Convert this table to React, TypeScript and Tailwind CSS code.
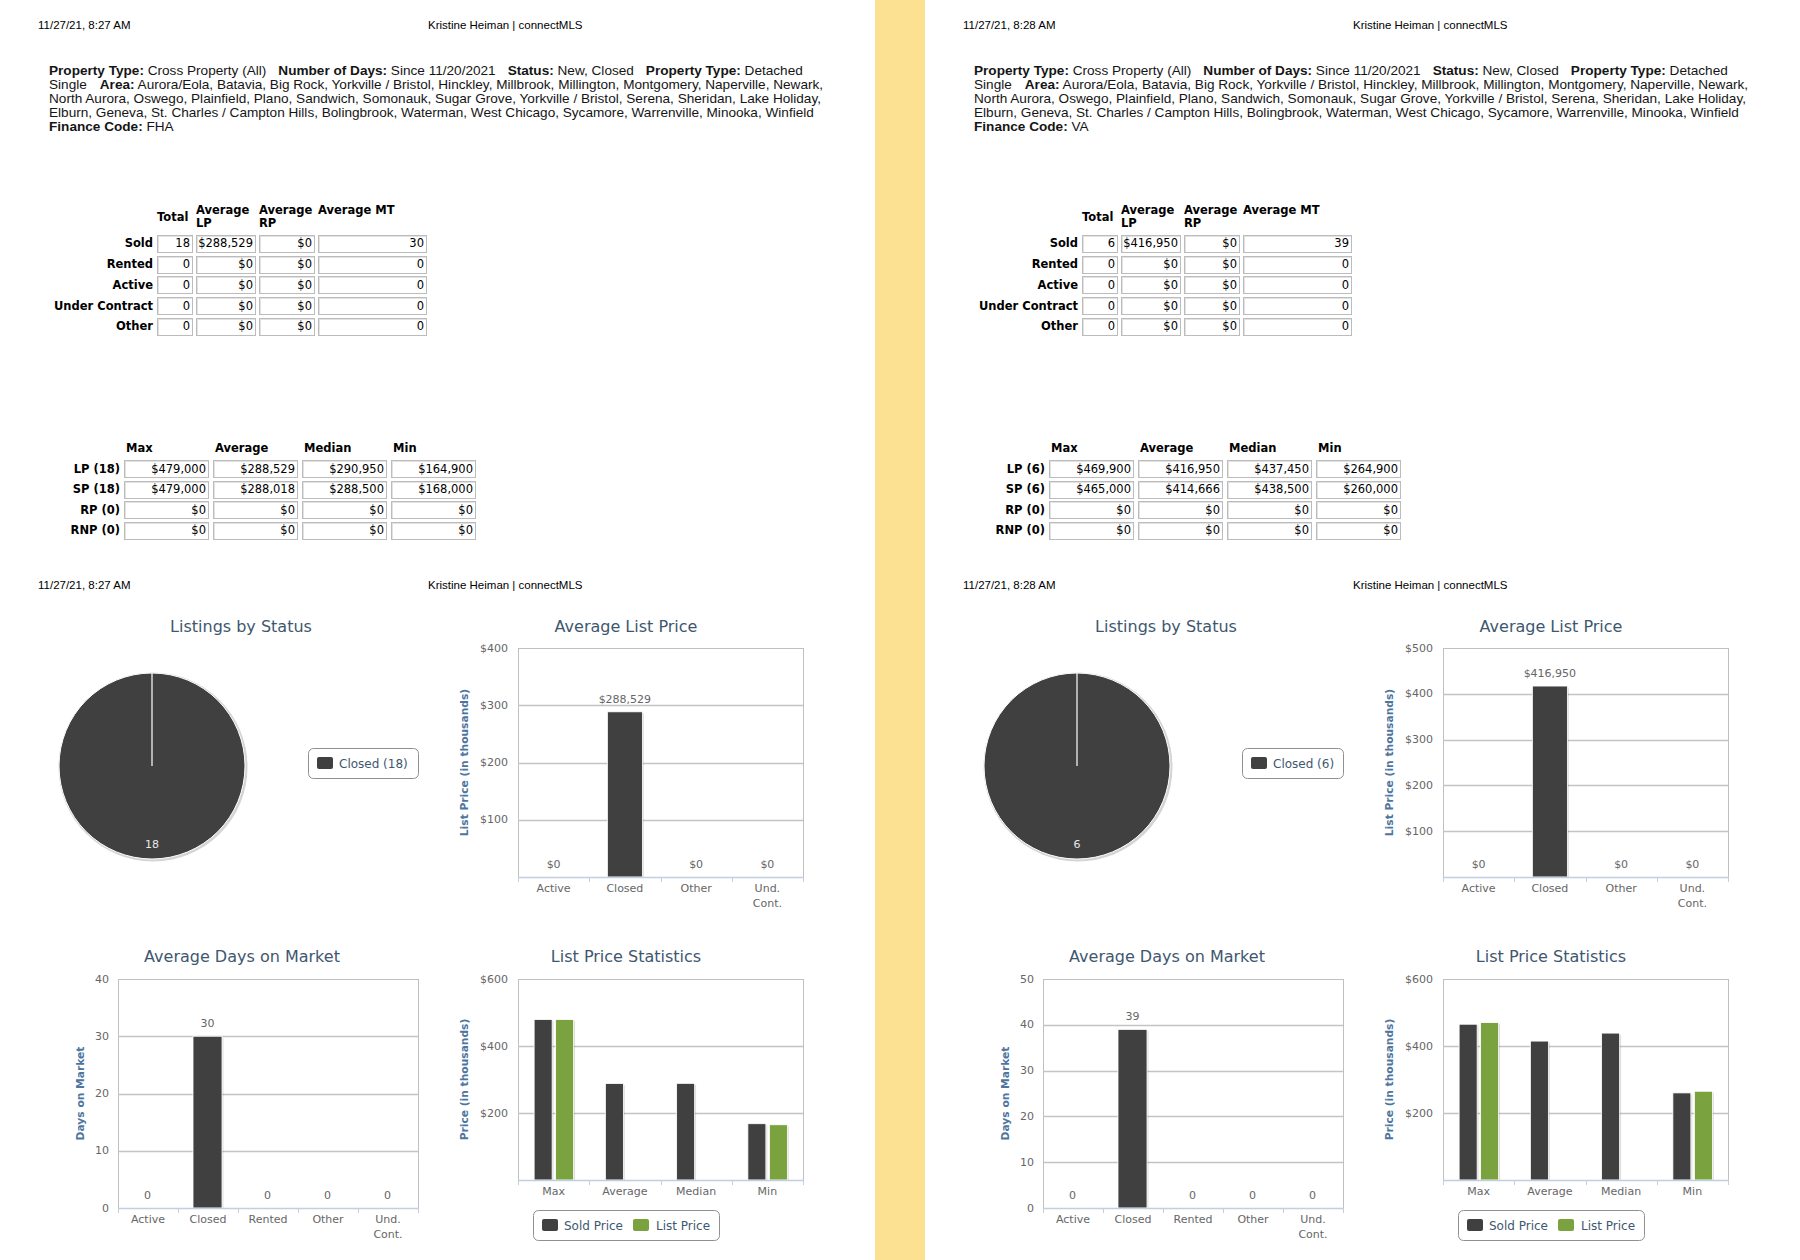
import React from "react";

const CHART_FONT = "DejaVu Sans, Verdana, sans-serif";
const DARK = "#404040";
const GREEN = "#7aa23e";

type PageData = {
  date: string;
  finance: string;
  t1: string[][];
  t2: { label: string; vals: string[] }[];
  pieCount: number;
  pieLegend: string;
  pieLegendX: number;
  pieLegendW: number;
  avgLP: { yMax: number; values: number[]; labels: string[] };
  days: { yMax: number; values: number[] };
  stats: { sold: number[]; list: (number | null)[] };
};

function Header({ date }: { date: string }) {
  return (
    <div className="flex items-center h-[14px] pl-[38px] font-['Liberation_Sans',Arial,sans-serif] text-[11.5px] leading-[14px] text-black whitespace-nowrap">
      <span className="w-[390px]">{date}</span>
      <span>Kristine Heiman | connectMLS</span>
    </div>
  );
}

function Criteria({ finance }: { finance: string }) {
  return (
    <div className="mt-[32px] pl-[49px] font-['Liberation_Sans',Arial,sans-serif] text-[13.6px] leading-[14px] text-[#151515] whitespace-nowrap">
      <div>
        <b>Property Type:</b> Cross Property (All)
        <b className="ml-[12px]">Number of Days:</b> Since 11/20/2021
        <b className="ml-[12px]">Status:</b> New, Closed
        <b className="ml-[12px]">Property Type:</b> Detached
      </div>
      <div>
        Single<b className="ml-[13px]">Area:</b> Aurora/Eola, Batavia, Big Rock, Yorkville / Bristol, Hinckley, Millbrook, Millington, Montgomery, Naperville, Newark,
      </div>
      <div>
        North Aurora, Oswego, Plainfield, Plano, Sandwich, Somonauk, Sugar Grove, Yorkville / Bristol, Serena, Sheridan, Lake Holiday,
      </div>
      <div>
        Elburn, Geneva, St. Charles / Campton Hills, Bolingbrook, Waterman, West Chicago, Sycamore, Warrenville, Minooka, Winfield
      </div>
      <div>
        <b>Finance Code:</b> {finance}
      </div>
    </div>
  );
}

const cellCls =
  "h-[18px] border border-[#bcbcbc] shadow-[inset_1px_1px_0_#e2e2e2] flex items-center justify-end pr-[2px] font-normal";

function Table1({ rows }: { rows: string[][] }) {
  const labels = ["Sold", "Rented", "Active", "Under Contract", "Other"];
  return (
    <div className="mt-[68px] grid grid-cols-[154px_36px_60px_56px_109px] gap-x-[3px] gap-y-[2.7px] font-['DejaVu_Sans',Verdana,sans-serif] text-[11.5px] leading-[13px] text-black w-max">
      <div className="h-[30px]" />
      <div className="h-[30px] flex items-center font-bold">Total</div>
      <div className="h-[30px] flex items-center font-bold">
        Average
        <br />
        LP
      </div>
      <div className="h-[30px] flex items-center font-bold">
        Average
        <br />
        RP
      </div>
      <div className="h-[30px] flex items-start pt-[2px] font-bold whitespace-nowrap">Average MT</div>
      {labels.map((l, i) => (
        <React.Fragment key={l}>
          <div className="h-[18px] flex items-center justify-end pr-[1px] font-bold whitespace-nowrap">{l}</div>
          {rows[i].map((v, j) => (
            <div key={j} className={cellCls}>
              {v}
            </div>
          ))}
        </React.Fragment>
      ))}
    </div>
  );
}

function Table2({ rows }: { rows: { label: string; vals: string[] }[] }) {
  return (
    <div className="mt-[106.7px] grid grid-cols-[120px_85px_85px_85px_85px] gap-x-[4px] gap-y-[2.4px] font-['DejaVu_Sans',Verdana,sans-serif] text-[11.5px] leading-[13px] text-black w-max">
      <div className="h-[15.6px]" />
      {["Max", "Average", "Median", "Min"].map((h) => (
        <div key={h} className="h-[15.6px] pl-[2px] font-bold">
          {h}
        </div>
      ))}
      {rows.map((r) => (
        <React.Fragment key={r.label}>
          <div className="h-[18px] flex items-center justify-end font-bold whitespace-nowrap">{r.label}</div>
          {r.vals.map((v, j) => (
            <div key={j} className={cellCls}>
              {v}
            </div>
          ))}
        </React.Fragment>
      ))}
    </div>
  );
}

function PieChart({ count, legend, lx, lw }: { count: number; legend: string; lx: number; lw: number }) {
  const cx = 152;
  const cy = 166;
  return (
    <svg width={437} height={330} className="block" fontFamily={CHART_FONT}>
      <text x={241} y={26} textAnchor="middle" dominantBaseline="central" fontSize={16} fill="#3e576f">
        Listings by Status
      </text>
      <circle cx={cx + 1} cy={cy + 1} r={94.5} fill="#d4d4d4" />
      <circle cx={cx} cy={cy} r={93} fill={DARK} stroke="#ffffff" strokeWidth={1} />
      <line x1={cx} y1={cy - 93} x2={cx} y2={cy} stroke="#ffffff" strokeWidth={1.2} />
      <text x={cx} y={244} textAnchor="middle" dominantBaseline="central" fontSize={11} fill="#e8e8e8">
        {count}
      </text>
      <rect x={lx + 0.5} y={148.5} width={lw} height={30} rx={5} fill="#ffffff" stroke="#909090" />
      <rect x={lx + 9} y={157} width={16} height={12} rx={2} fill={DARK} />
      <text x={lx + 31} y={163.5} dominantBaseline="central" fontSize={12} fill="#3e576f">
        {legend}
      </text>
    </svg>
  );
}

type Bar = { color: string; value: number | null; w: number; off: number; label?: string };

function BarChart(props: {
  w: number;
  title: string;
  titleX: number;
  l: number;
  r: number;
  t: number;
  b: number;
  yMax: number;
  yStep: number;
  fmt: (v: number) => string;
  showZero: boolean;
  yLabelX: number;
  axisTitle: string;
  axisX: number;
  cats: string[][];
  bars: Bar[][];
  legend?: boolean;
}) {
  const { w, title, titleX, l, r, t, b, yMax, yStep, fmt, showZero, yLabelX, axisTitle, axisX, cats, bars, legend } = props;
  const ticks: number[] = [];
  for (let v = 0; v <= yMax; v += yStep) ticks.push(v);
  const Y = (v: number) => b - (v / yMax) * (b - t);
  const cw = (r - l) / cats.length;
  return (
    <svg width={w} height={330} className="block" fontFamily={CHART_FONT}>
      <text x={titleX} y={26} textAnchor="middle" dominantBaseline="central" fontSize={16} fill="#3e576f">
        {title}
      </text>
      <rect x={l + 0.5} y={t + 0.5} width={r - l} height={b - t} fill="#ffffff" stroke="#c0c0c0" />
      {ticks
        .filter((v) => v > 0 && v < yMax)
        .map((v) => (
          <line key={v} x1={l} x2={r} y1={Math.round(Y(v)) + 0.5} y2={Math.round(Y(v)) + 0.5} stroke="#c4c4c4" strokeWidth={1.3} />
        ))}
      {ticks
        .filter((v) => showZero || v > 0)
        .map((v) => (
          <text key={v} x={yLabelX} y={Y(v)} textAnchor="end" dominantBaseline="central" fontSize={11} fill="#666666">
            {fmt(v)}
          </text>
        ))}
      <text
        transform={`translate(${axisX},${(t + b) / 2}) rotate(-90)`}
        textAnchor="middle"
        dominantBaseline="central"
        fontSize={10.7}
        fontWeight="bold"
        fill="#4d759e"
      >
        {axisTitle}
      </text>
      {cats.map((_, i) => {
        const cx = l + cw * (i + 0.5);
        return bars[i].map((bar, k) => {
          if (bar.value === null) return null;
          const top = Y(bar.value);
          const x = cx + bar.off;
          return (
            <g key={`${i}-${k}`}>
              {bar.value > 0 && (
                <>
                  <rect x={x + 1.5} y={top + 1.5} width={bar.w} height={b - top - 1.5} fill="rgba(0,0,0,0.12)" />
                  <rect x={x} y={top} width={bar.w} height={b - top} fill={bar.color} stroke="#ffffff" strokeWidth={0.8} />
                </>
              )}
              {bar.label !== undefined && (
                <text x={x + bar.w / 2} y={top - 12.5} textAnchor="middle" dominantBaseline="central" fontSize={11} fill="#666666">
                  {bar.label}
                </text>
              )}
            </g>
          );
        });
      })}
      <line x1={l} x2={r + 1} y1={b + 0.5} y2={b + 0.5} stroke="#c0d0e0" strokeWidth={1.5} />
      {Array.from({ length: cats.length + 1 }).map((_, i) => {
        const x = Math.round(l + cw * i) + 0.5;
        return <line key={i} x1={x} x2={x} y1={b} y2={b + 5} stroke="#c0d0e0" />;
      })}
      {cats.map((lines, i) => {
        const cx = l + cw * (i + 0.5);
        return lines.map((ln, j) => (
          <text key={`${i}-${j}`} x={cx} y={b + 11 + j * 15} textAnchor="middle" dominantBaseline="central" fontSize={11} fill="#666666">
            {ln}
          </text>
        ));
      })}
      {legend && (
        <g>
          <rect x={96.5} y={280.5} width={186} height={30} rx={5} fill="#ffffff" stroke="#909090" />
          <rect x={105} y={289} width={16} height={12} rx={2} fill={DARK} />
          <text x={127} y={295.5} dominantBaseline="central" fontSize={12} fill="#3e576f">
            Sold Price
          </text>
          <rect x={196} y={289} width={16} height={12} rx={2} fill={GREEN} />
          <text x={219} y={295.5} dominantBaseline="central" fontSize={12} fill="#3e576f">
            List Price
          </text>
        </g>
      )}
    </svg>
  );
}

const dollars = (v: number) => `$${v}`;
const plain = (v: number) => `${v}`;

function Page({ d }: { d: PageData }) {
  const avgCats = [["Active"], ["Closed"], ["Other"], ["Und.", "Cont."]];
  const dayCats = [["Active"], ["Closed"], ["Rented"], ["Other"], ["Und.", "Cont."]];
  const statCats = [["Max"], ["Average"], ["Median"], ["Min"]];
  return (
    <div className="w-[875px] shrink-0 flex flex-col bg-white">
      <div className="h-[19px]" />
      <Header date={d.date} />
      <Criteria finance={d.finance} />
      <Table1 rows={d.t1} />
      <Table2 rows={d.t2} />
      <div className="h-[40.3px]" />
      <Header date={d.date} />
      <div className="h-[8px]" />
      <div className="grid grid-cols-[437px_438px]">
        <PieChart count={d.pieCount} legend={d.pieLegend} lx={d.pieLegendX} lw={d.pieLegendW} />
        <BarChart
          w={438}
          title="Average List Price"
          titleX={189}
          l={81}
          r={366}
          t={48}
          b={277}
          yMax={d.avgLP.yMax}
          yStep={100}
          fmt={dollars}
          showZero={false}
          yLabelX={71}
          axisTitle="List Price (in thousands)"
          axisX={27}
          cats={avgCats}
          bars={d.avgLP.values.map((v, i) => [
            { color: DARK, value: v / 1000, w: 35, off: -17.5, label: d.avgLP.labels[i] },
          ])}
        />
        <BarChart
          w={437}
          title="Average Days on Market"
          titleX={242}
          l={118}
          r={418}
          t={49}
          b={278}
          yMax={d.days.yMax}
          yStep={10}
          fmt={plain}
          showZero={true}
          yLabelX={109}
          axisTitle="Days on Market"
          axisX={80}
          cats={dayCats}
          bars={d.days.values.map((v) => [{ color: DARK, value: v, w: 29, off: -15, label: `${v}` }])}
        />
        <BarChart
          w={438}
          title="List Price Statistics"
          titleX={189}
          l={81}
          r={366}
          t={49}
          b={250}
          yMax={600}
          yStep={200}
          fmt={dollars}
          showZero={false}
          yLabelX={71}
          axisTitle="Price (in thousands)"
          axisX={27}
          cats={statCats}
          legend
          bars={d.stats.sold.map((s, i) => [
            { color: DARK, value: s / 1000, w: 18, off: -19.5 },
            { color: GREEN, value: d.stats.list[i] === null ? null : (d.stats.list[i] as number) / 1000, w: 18, off: 2 },
          ])}
        />
      </div>
    </div>
  );
}

const zeroRow = ["0", "$0", "$0", "0"];
const zeroT2 = ["$0", "$0", "$0", "$0"];

const LEFT: PageData = {
  date: "11/27/21, 8:27 AM",
  finance: "FHA",
  t1: [["18", "$288,529", "$0", "30"], zeroRow, zeroRow, zeroRow, zeroRow],
  t2: [
    { label: "LP (18)", vals: ["$479,000", "$288,529", "$290,950", "$164,900"] },
    { label: "SP (18)", vals: ["$479,000", "$288,018", "$288,500", "$168,000"] },
    { label: "RP (0)", vals: zeroT2 },
    { label: "RNP (0)", vals: zeroT2 },
  ],
  pieCount: 18,
  pieLegend: "Closed (18)",
  pieLegendX: 308,
  pieLegendW: 110,
  avgLP: { yMax: 400, values: [0, 288529, 0, 0], labels: ["$0", "$288,529", "$0", "$0"] },
  days: { yMax: 40, values: [0, 30, 0, 0, 0] },
  stats: { sold: [479000, 288018, 288500, 168000], list: [479000, null, null, 164900] },
};

const RIGHT: PageData = {
  date: "11/27/21, 8:28 AM",
  finance: "VA",
  t1: [["6", "$416,950", "$0", "39"], zeroRow, zeroRow, zeroRow, zeroRow],
  t2: [
    { label: "LP (6)", vals: ["$469,900", "$416,950", "$437,450", "$264,900"] },
    { label: "SP (6)", vals: ["$465,000", "$414,666", "$438,500", "$260,000"] },
    { label: "RP (0)", vals: zeroT2 },
    { label: "RNP (0)", vals: zeroT2 },
  ],
  pieCount: 6,
  pieLegend: "Closed (6)",
  pieLegendX: 317,
  pieLegendW: 101,
  avgLP: { yMax: 500, values: [0, 416950, 0, 0], labels: ["$0", "$416,950", "$0", "$0"] },
  days: { yMax: 50, values: [0, 39, 0, 0, 0] },
  stats: { sold: [465000, 414666, 438500, 260000], list: [469900, null, null, 264900] },
};

export default function App() {
  return (
    <div className="flex w-[1800px] h-[1260px] overflow-hidden bg-white">
      <Page d={LEFT} />
      <div className="w-[50px] shrink-0 bg-[#fde193]" />
      <Page d={RIGHT} />
    </div>
  );
}
